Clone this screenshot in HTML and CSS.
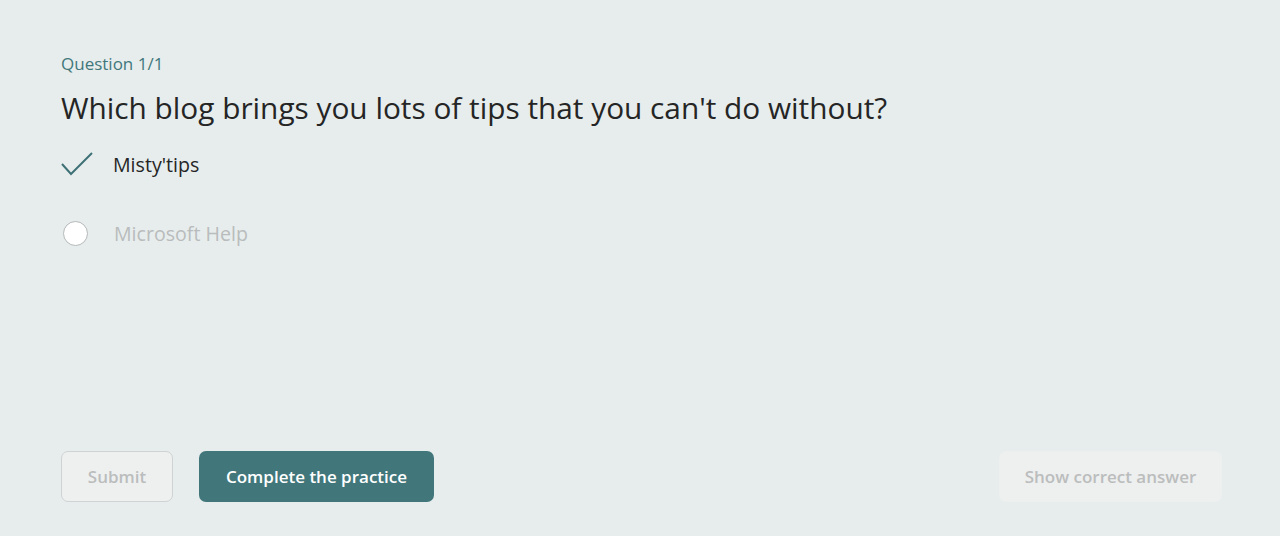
FILE: index.html
```html
<!DOCTYPE html>
<html lang="en">
<head>
  <meta charset="UTF-8" />
  <title>Practice</title>
  <link rel="stylesheet" href="styles.css">
</head>
<body>
  <div class="quiz">
    <div class="counter">Question 1/1</div>
    <h1 class="question">Which blog brings you lots of tips that you can't do without?</h1>

    <div class="option selected">
      <svg class="check" width="32" height="26" viewBox="0 0 32 26">
        <path d="M1 13 L10 23 L31 2" fill="none" stroke="#3e7176" stroke-width="2"/>
      </svg>
      <span>Misty'tips</span>
    </div>
    <div class="option muted">
      <span class="radio"></span>
      <span>Microsoft Help</span>
    </div>

    <div class="actions">
      <button class="btn btn-submit" disabled>Submit</button>
      <button class="btn btn-primary">Complete the practice</button>
      <button class="btn btn-show" disabled>Show correct answer</button>
    </div>
  </div>
</body>
</html>
```

FILE: styles.css
```css
body {
  margin: 0;
  background: #e7eded;
  font-family: 'Open Sans', 'Noto Sans', sans-serif;
  color: #252525;
}

.quiz {
  height: 100vh;
  box-sizing: border-box;
  padding: 52px 58px 34px 61px;
  display: flex;
  flex-direction: column;
}

.counter {
  font-size: 17px;
  color: #41777b;
  line-height: 24px;
}

.question {
  font-size: 29.8px;
  font-weight: normal;
  margin: 12px 0 16px;
  line-height: 40px;
}

.option {
  display: flex;
  align-items: center;
  gap: 20px;
  font-size: 19.6px;
  height: 40px;
}

.option + .option {
  margin-top: 29px;
}

.option.muted {
  color: #b9bcbc;
}

.check {
  width: 32px;
}

.radio {
  width: 25px;
  height: 25px;
  border-radius: 50%;
  background: white;
  border: 1px solid #b5b8b8;
  box-sizing: border-box;
  margin: 0 6px 0 2px;
}

.actions {
  margin-top: auto;
  display: flex;
  gap: 26px;
}

.btn {
  font-family: inherit;
  font-size: 17px;
  font-weight: 600;
  height: 51px;
  padding: 0 25px;
  border-radius: 7px;
  border: none;
}

.btn-submit {
  background: #eef0f0;
  border: 1px solid #cfd3d3;
  color: #bbbdbd;
  width: 112px;
}

.btn-primary {
  background: #41777b;
  color: #ffffff;
  width: 235px;
}

.btn-show {
  margin-left: auto;
  background: #eeefef;
  color: #bbbdbd;
  width: 223px;
}
```
